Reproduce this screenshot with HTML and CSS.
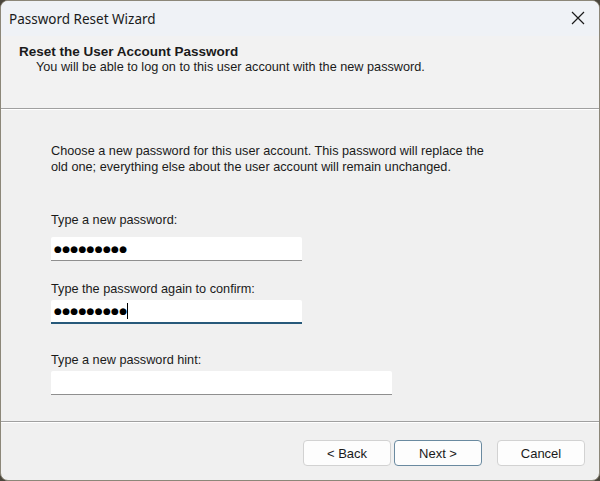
FILE: index.html
```html
<!DOCTYPE html>
<html>
<head>
<meta charset="utf-8">
<link rel="stylesheet" href="styles.css">
</head>
<body>
<div class="window">
  <div class="titlebar">
    <span class="title">Password Reset Wizard</span>
    <svg class="close" width="14" height="14" viewBox="0 0 14 14"><path d="M1 1 L13 13 M13 1 L1 13" stroke="#1a1a1a" stroke-width="1.2" fill="none"/></svg>
  </div>
  <div class="header">
    <div class="h-title">Reset the User Account Password</div>
    <div class="h-sub">You will be able to log on to this user account with the new password.</div>
  </div>
  <div class="sep"></div>
  <div class="content">
    <p class="intro">Choose a new password for this user account. This password will replace the<br>old one; everything else about the user account will remain unchanged.</p>
    <div class="field f1">
      <div class="label">Type a new password:</div>
      <div class="input"><span class="dots">●●●●●●●●●</span></div>
    </div>
    <div class="field f2">
      <div class="label">Type the password again to confirm:</div>
      <div class="input focused"><span class="dots">●●●●●●●●●</span><span class="caret"></span></div>
    </div>
    <div class="field f3">
      <div class="label">Type a new password hint:</div>
      <div class="input wide"></div>
    </div>
  </div>
  <div class="sep"></div>
  <div class="footer">
    <button class="btn">&lt; Back</button>
    <button class="btn default">Next &gt;</button>
    <button class="btn cancel">Cancel</button>
  </div>
</div>
</body>
</html>
```
FILE: styles.css
```css
html, body {
  margin: 0;
  padding: 0;
  width: 600px;
  height: 481px;
  background: #4a463c;
  overflow: hidden;
}
.window {
  box-sizing: border-box;
  width: 600px;
  height: 481px;
  border: 1px solid #8c8779;
  border-radius: 8px;
  background: #f0f0f0;
  display: flex;
  flex-direction: column;
  overflow: hidden;
  font-family: "Liberation Sans", Arial, sans-serif;
  font-size: 12.7px;
  color: #1a1a1a;
}
.titlebar {
  height: 35px;
  flex: none;
  background: #eff2f6;
  display: flex;
  align-items: center;
  justify-content: space-between;
  padding: 0 14px 0 8px;
}
.title {
  font-family: "Noto Sans", "Open Sans", sans-serif;
  font-size: 13.5px;
  color: #1a1a1a;
}
.close { display: block; margin-top: -1px; }
.header {
  height: 72px;
  flex: none;
  background: #f2f2f2;
  padding: 8px 0 0 18px;
  box-sizing: border-box;
}
.h-title {
  font-weight: bold;
  font-size: 13.5px;
  line-height: 15px;
}
.h-sub {
  padding-left: 17px;
  line-height: 17px;
}
.sep {
  height: 1px;
  flex: none;
  background: #a0a0a0;
  border-bottom: 1px solid #ffffff;
}
.content {
  flex: 1;
  padding: 33px 0 0 50px;
}
.intro {
  margin: 0;
  line-height: 16px;
}
.label {
  line-height: 16px;
}
.f1 { margin-top: 37px; }
.f1 .label { margin-bottom: 9px; }
.f2 { margin-top: 20px; }
.f2 .label { margin-bottom: 3px; }
.f3 { margin-top: 28px; }
.f3 .label { margin-bottom: 3px; }
.input {
  box-sizing: border-box;
  width: 251px;
  height: 24px;
  background: #ffffff;
  border-bottom: 1px solid #8f8f8f;
  border-radius: 2px 2px 0 0;
  display: flex;
  align-items: center;
  padding-left: 3px;
}
.input.focused {
  border-bottom: 2px solid #27597a;
}
.input.wide { width: 341px; }
.dots {
  font-family: "DejaVu Sans", sans-serif;
  font-size: 9px;
  letter-spacing: 0.3px;
  color: #000;
}
.caret {
  width: 1px;
  height: 16px;
  background: #000;
  margin-left: 0;
}
.footer {
  height: 57px;
  flex: none;
  display: flex;
  justify-content: flex-end;
  align-items: flex-start;
  padding: 17px 14px 0 0;
  box-sizing: border-box;
}
.btn {
  width: 88px;
  height: 26px;
  box-sizing: border-box;
  background: #fdfdfd;
  border: 1px solid #d2d2d2;
  border-radius: 4px;
  font-family: "Liberation Sans", Arial, sans-serif;
  font-size: 13px;
  color: #1a1a1a;
  padding: 0;
  margin-left: 3px;
}
.btn.default {
  border: 1px solid #6a8aa0;
}
.btn.cancel { margin-left: 15px; }
```
